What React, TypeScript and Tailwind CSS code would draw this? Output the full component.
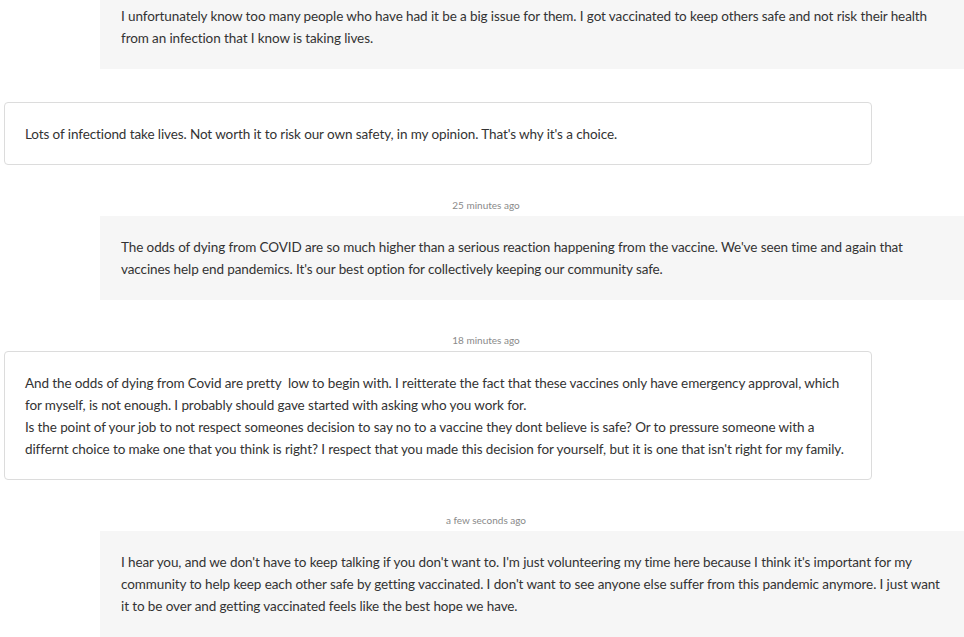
import React from "react";

type Msg = { side: "left" | "right"; time?: string; lines: string[] };

const msgs: Msg[] = [
  {
    side: "right",
    lines: [
      "I unfortunately know too many people who have had it be a big issue for them. I got vaccinated to keep others safe and not risk their health",
      "from an infection that I know is taking lives.",
    ],
  },
  {
    side: "left",
    lines: [
      "Lots of infectiond take lives. Not worth it to risk our own safety, in my opinion. That's why it's a choice.",
    ],
  },
  {
    side: "right",
    time: "25 minutes ago",
    lines: [
      "The odds of dying from COVID are so much higher than a serious reaction happening from the vaccine. We've seen time and again that",
      "vaccines help end pandemics. It's our best option for collectively keeping our community safe.",
    ],
  },
  {
    side: "left",
    time: "18 minutes ago",
    lines: [
      "And the odds of dying from Covid are pretty\u00a0 low to begin with. I reitterate the fact that these vaccines only have emergency approval, which",
      "for myself, is not enough. I probably should gave started with asking who you work for.",
      "Is the point of your job to not respect someones decision to say no to a vaccine they dont believe is safe? Or to pressure someone with a",
      "differnt choice to make one that you think is right? I respect that you made this decision for yourself, but it is one that isn't right for my family.",
    ],
  },
  {
    side: "right",
    time: "a few seconds ago",
    lines: [
      "I hear you, and we don't have to keep talking if you don't want to. I'm just volunteering my time here because I think it's important for my",
      "community to help keep each other safe by getting vaccinated. I don't want to see anyone else suffer from this pandemic anymore. I just want",
      "it to be over and getting vaccinated feels like the best hope we have.",
    ],
  },
];

export default function App() {
  return (
    <div
      className="w-[964px] h-[637px] overflow-hidden bg-white text-[#333333]"
      style={{ fontFamily: "Lato, 'Noto Sans', sans-serif" }}
    >
      <div className="-mt-[15px] flex flex-col">
        {msgs.map((m, i) => (
          <div key={i} className={i === 0 ? "" : "mt-[33px]"}>
            {m.time && (
              <div className="pl-[8px] text-center text-[10px] leading-[14px] text-[#8a8a8a] mb-[4px]">
                {m.time}
              </div>
            )}
            {m.side === "right" ? (
              <div className="ml-[100px] bg-[#f6f6f6] px-[21px] py-[20px] text-[13.5px] leading-[22px] tracking-[-0.1px]">
                {m.lines.map((l, j) => (
                  <div key={j} className="whitespace-nowrap">{l}</div>
                ))}
              </div>
            ) : (
              <div className="ml-[4px] w-[868px] rounded-[4px] border border-[#dcdcdc] bg-white px-[20px] py-[19.5px] text-[13.5px] leading-[22px] tracking-[-0.1px]">
                {m.lines.map((l, j) => (
                  <div key={j} className="whitespace-nowrap">{l}</div>
                ))}
              </div>
            )}
          </div>
        ))}
      </div>
    </div>
  );
}
